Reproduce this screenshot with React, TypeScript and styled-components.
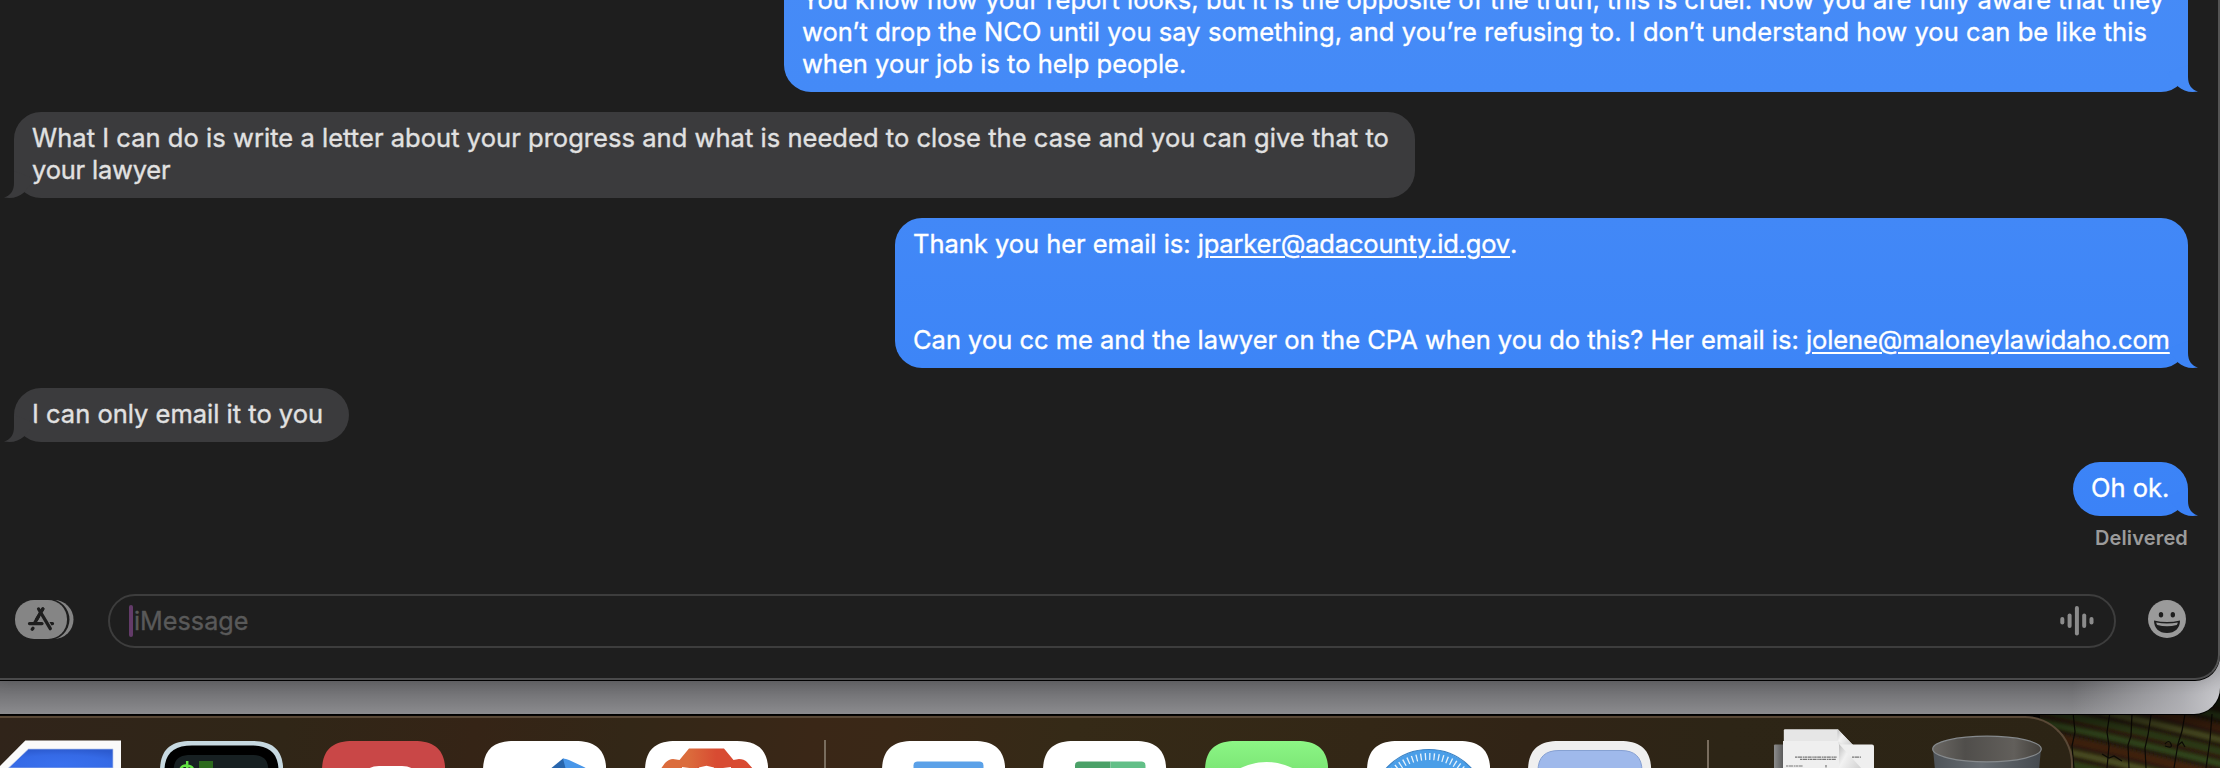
import React from "react";
import styled, { createGlobalStyle } from "styled-components";

const Global = createGlobalStyle`
  * { box-sizing: border-box; }
  html, body { margin: 0; background: #000; overflow: hidden; }
  body { font-family: Inter, "Liberation Sans", sans-serif; }
`;

/* ---------- desktop and windows ---------- */

const Desktop = styled.div`
  position: relative;
  width: 2220px;
  height: 768px;
  overflow: hidden;
  background: #060402;
`;

const Wallpaper = styled.svg`
  position: absolute;
  right: 0;
  bottom: 0;
`;

const BackWindow = styled.div`
  position: relative;
  height: 714px;
  border-radius: 0 0 26px 0;
  overflow: hidden;
  background:
    radial-gradient(circle at 2222px 700px, #c9c9cd 0, rgba(190, 190, 195, 0.75) 40px, rgba(150, 150, 154, 0) 150px),
    linear-gradient(#67676a 682px, #8b8b8e 714px);
  box-shadow: 0 0 0 1px #000;
`;

const ChatWindow = styled.div`
  display: flex;
  flex-direction: column;
  height: 680px;
  border-right: 2px solid #545454;
  border-bottom: 2px solid #4a4a4b;
  border-radius: 0 0 25px 0;
  background: #1e1e1e;
  box-shadow: 0 1px 0 #000, 0 2px 14px rgba(0, 0, 0, 0.12);
`;

/* ---------- messages ---------- */

const Conversation = styled.div`
  display: flex;
  flex-direction: column;
  justify-content: flex-end;
  gap: 20px;
  height: 516px;
  flex: none;
  padding: 0 30px 0 14px;
`;

const Clip = styled.div`
  overflow: hidden;
  flex: none;
`;

const Bubble = styled.div<{ $sent?: boolean; $width: number; $top?: string; $bottom?: string }>`
  position: relative;
  flex: none;
  align-self: ${(p) => (p.$sent ? "flex-end" : "flex-start")};
  width: ${(p) => p.$width}px;
  padding: 10px 18px 12px;
  border-radius: 27px;
  color: ${(p) => (p.$sent ? "#fff" : "#e1e1e1")};
  background: ${(p) => (p.$sent ? `linear-gradient(${p.$top}, ${p.$bottom})` : "#3b3b3d")};
`;

const TailShape = styled.svg<{ $sent?: boolean; $color: string }>`
  position: absolute;
  bottom: 0;
  width: 37px;
  height: 27px;
  fill: ${(p) => p.$color};
  ${(p) => (p.$sent ? "right: -10px;" : "left: -10px; transform: scaleX(-1);")}
`;

const TextLine = styled.div<{ $tracking?: number }>`
  height: 32px;
  font-size: 25.5px;
  line-height: 32px;
  white-space: pre;
  letter-spacing: ${(p) => p.$tracking ?? 0}px;
  -webkit-text-stroke: 0.35px currentColor;
`;

const MailLink = styled.span<{ $tracking: number }>`
  letter-spacing: ${(p) => p.$tracking}px;
  text-decoration: underline;
  text-decoration-thickness: 2px;
  text-underline-offset: 3px;
`;

const Delivered = styled.div`
  align-self: flex-end;
  margin: 10px 30px 0 0;
  height: 24px;
  font-size: 20px;
  font-weight: 600;
  line-height: 24px;
  letter-spacing: 0.15px;
  color: #9b9b9b;
`;

function Tail({ sent, color }: { sent?: boolean; color: string }) {
  return (
    <TailShape viewBox="0 0 37 27" $sent={sent} $color={color}>
      <path d="M27 0V12C27 20 31 25 37 26.5C29 28 22 26 17 21.5L6 8Z" />
    </TailShape>
  );
}

/* ---------- composer ---------- */

const Composer = styled.div`
  display: flex;
  align-items: center;
  height: 54px;
  margin-top: 44px;
  padding: 0 32px 0 15px;
  flex: none;
`;

const AppsButton = styled.svg`
  width: 59px;
  height: 39px;
  margin: 0 34px 3px 0;
`;

const Field = styled.div`
  display: flex;
  align-items: center;
  flex: 1;
  height: 54px;
  padding: 0 20px 0 19px;
  border: 2px solid #3d3d3d;
  border-radius: 27px;
`;

const Caret = styled.span`
  width: 4px;
  height: 32px;
  border-radius: 2px;
  background: #633b69;
`;

const Placeholder = styled.span`
  flex: 1;
  margin-left: 1px;
  font-size: 25.2px;
  line-height: 32px;
  color: #595959;
  -webkit-text-stroke: 0.35px currentColor;
`;

const Wave = styled.svg`
  width: 34px;
  height: 30px;
`;

const EmojiButton = styled.svg`
  width: 38px;
  height: 38px;
  margin: 0 0 4px 32px;
`;

/* ---------- dock ---------- */

const Dock = styled.div`
  position: relative;
  display: flex;
  align-items: flex-start;
  gap: 38.5px;
  width: 2073px;
  height: 90px;
  margin-top: 2px;
  padding: 10px 0 0;
  border: solid #594836;
  border-width: 2px 2px 0 0;
  border-radius: 0 48px 0 0;
  background: linear-gradient(100deg, #30241a 0, #302617 280px, #352416 470px, #332717 620px, #3a2717 800px, #3a2817 880px, #352a17 1060px, #332716 1350px, #312416 1510px, #2d2516 1700px, #2c2415 100%);
`;

const DockIcon = styled.svg<{ $first?: boolean }>`
  flex: none;
  width: 123.2px;
  height: 40px;
  margin-left: ${(p) => (p.$first ? "-1.8px" : "0")};
`;

const Separator = styled.div`
  flex: none;
  width: 2px;
  height: 60px;
  margin: 12px 17.3px 0;
  background: #796d5e;
`;

function Tile({ fill = "#fff" }: { fill?: string }) {
  return <path d="M0 43C0 22 10 13 31 13H92C113 13 123.2 22 123.2 43V60H0Z" fill={fill} />;
}

const rows = Array.from({ length: 16 }, (_, i) => i);

export default function App() {
  return (
    <>
      <Global />
      <Desktop>
        <Wallpaper width="180" height="90" viewBox="0 0 180 90">
          <defs>
            <linearGradient id="shade" x1="0" y1="0" x2="0" y2="1">
              <stop offset="0.3" stopColor="#000" stopOpacity="0.7" />
              <stop offset="0.6" stopColor="#000" stopOpacity="0.15" />
              <stop offset="1" stopColor="#000" stopOpacity="0" />
            </linearGradient>
            <filter id="soft"><feGaussianBlur stdDeviation="1.4" /></filter>
          </defs>
          <rect width="180" height="90" fill="#2a220d" />
          <g filter="url(#soft)" fill="none">
            {rows.map((i) => (
              <path
                key={i}
                d={`M-5 ${i * 12 - 53}Q70 ${i * 12 - 38} 190 ${i * 12 - 8}`}
                stroke={["#33461a", "#42230f", "#4b4d20", "#2f3d14"][i % 4]}
                strokeWidth={i % 2 ? 7 : 6}
              />
            ))}
            {rows.map((i) => (
              <path
                key={i}
                d={`M-5 ${i * 12 - 48}Q70 ${i * 12 - 33} 190 ${i * 12 - 3}`}
                stroke={i % 2 ? "#32170d" : "#22140a"}
                strokeWidth="2.5"
              />
            ))}
          </g>
          <g stroke="#0d0a06" strokeWidth="1.2" fill="none">
            <path d="M33 34l2 20-3 14 2 22M70 34l-3 20 2 14-2 22M92 36l-1 22-3 9 1 23M111 37l-3 20-3 13 1 20M145 36l-3 17-4 13-4 24M172 36l-2 26-4 28" />
            <path d="M62 76l7 4 5-2 8 5M125 66q4-5 6 0t-6 2M137 68l5-4 3 5" />
          </g>
          <rect width="180" height="90" fill="url(#shade)" />
        </Wallpaper>

        <BackWindow>
          <ChatWindow>
            <Clip>
              <Conversation>
                <Bubble $sent $width={1404} $top="#468bf7" $bottom="#448af7">
                  <TextLine $tracking={0.03}>You know how your report looks, but it is the opposite of the truth, this is cruel. Now you are fully aware that they</TextLine>
                  <TextLine $tracking={0.06}>won’t drop the NCO until you say something, and you’re refusing to. I don’t understand how you can be like this</TextLine>
                  <TextLine>when your job is to help people.</TextLine>
                  <Tail sent color="#448af7" />
                </Bubble>
                <Bubble $width={1401}>
                  <TextLine $tracking={0.04}>What I can do is write a letter about your progress and what is needed to close the case and you can give that to</TextLine>
                  <TextLine $tracking={-0.2}>your lawyer</TextLine>
                  <Tail color="#3b3b3d" />
                </Bubble>
                <Bubble $sent $width={1293} $top="#4288f7" $bottom="#3d85f7">
                  <TextLine $tracking={-0.03}>
                    Thank you her email is: <MailLink $tracking={-0.17}>jparker@adacounty.id.gov</MailLink>.
                  </TextLine>
                  <TextLine />
                  <TextLine />
                  <TextLine $tracking={-0.015}>
                    Can you cc me and the lawyer on the CPA when you do this? Her email is: <MailLink $tracking={-0.1}>jolene@maloneylawidaho.com</MailLink>
                  </TextLine>
                  <Tail sent color="#3d85f7" />
                </Bubble>
                <Bubble $width={335}>
                  <TextLine>I can only email it to you</TextLine>
                  <Tail color="#3b3b3d" />
                </Bubble>
                <Bubble $sent $width={115} $top="#3c84f7" $bottom="#3b82f7">
                  <TextLine>Oh ok.</TextLine>
                  <Tail sent color="#3b82f7" />
                </Bubble>
              </Conversation>
            </Clip>
            <Delivered>Delivered</Delivered>

            <Composer>
              <AppsButton viewBox="0 0 59 39">
                <rect x="10" width="48.5" height="39" rx="19.5" fill="#858585" />
                <rect x="-3" y="-1" width="57.5" height="41" rx="20.5" fill="#1e1e1e" />
                <rect width="52" height="39" rx="19" fill="#858585" />
                <g stroke="#1e1e1e" strokeWidth="3.3" strokeLinecap="round" fill="none">
                  <path d="M27.8 9L19.3 23.5M14.5 23.6H27M33.5 23.6H37.5M18 28.2L17.2 29.2" />
                </g>
                <path d="M26 12.5L34 26.5" stroke="#858585" strokeWidth="5.4" />
                <path d="M23.6 9L35.3 28.7" stroke="#1e1e1e" strokeWidth="3.3" strokeLinecap="round" />
                <path d="M27.8 9L21.5 19.7" stroke="#1e1e1e" strokeWidth="3.3" strokeLinecap="round" />
              </AppsButton>
              <Field>
                <Caret />
                <Placeholder>iMessage</Placeholder>
                <Wave viewBox="0 0 34 30">
                  <g fill="#8b8b8b">
                    <rect x="0.3" y="11" width="4" height="7.5" rx="2" />
                    <rect x="7.6" y="7.5" width="4" height="14.5" rx="2" />
                    <rect x="14.9" y="0" width="4" height="29.5" rx="2" />
                    <rect x="22.2" y="7.5" width="4" height="14.5" rx="2" />
                    <rect x="29.5" y="11" width="4" height="7.5" rx="2" />
                  </g>
                </Wave>
              </Field>
              <EmojiButton viewBox="0 0 38 38">
                <circle cx="19" cy="19" r="19" fill="#9a9a9a" />
                <ellipse cx="13" cy="14.7" rx="2.2" ry="2.7" fill="#1e1e1e" />
                <ellipse cx="24.8" cy="14.7" rx="2.2" ry="2.7" fill="#1e1e1e" />
                <path d="M6 20.4Q19 23.4 32 20.4C32 28 27 33 19 33C11 33 6 28 6 20.4Z" fill="#1e1e1e" />
                <path d="M8.2 22.4Q19 24.6 29.8 22.4Q29.5 24 28.7 25.1Q19 27.6 9.3 25.1Q8.5 24 8.2 22.4Z" fill="#9a9a9a" />
              </EmojiButton>
            </Composer>
          </ChatWindow>
        </BackWindow>

        <Dock>
          <DockIcon $first viewBox="0 0 123.2 40">
            <defs>
              <radialGradient id="blueSheet" cx="0.5" cy="0.8" r="0.8">
                <stop offset="0" stopColor="#3970ee" />
                <stop offset="0.6" stopColor="#356ae6" />
                <stop offset="1" stopColor="#2c5bd0" />
              </radialGradient>
            </defs>
            <path d="M0 40L27.3 12.4H123V40Z" fill="#fafafa" />
            <path d="M10.5 40L30.5 21H115V40Z" fill="url(#blueSheet)" stroke="#b9c6e8" strokeWidth="0.7" />
          </DockIcon>
          <DockIcon viewBox="0 0 123.2 40">
            <Tile fill="#c7d9e1" />
            <path d="M4.5 48V43C4.5 25 14 17.5 32 17.5H91C109 17.5 118.5 25 118.5 43V48Z" fill="#000" />
            <path d="M13.5 48V44C13.5 31 19 27 31 27H91C103 27 108.5 31 108.5 44V48Z" fill="#172022" />
            <path d="M27.2 33V40M20.5 41Q22 37 27 37.5T33 41" stroke="#62e143" strokeWidth="2.5" fill="none" />
            <rect x="39" y="33" width="14" height="8" fill="#2c6a1d" />
          </DockIcon>
          <DockIcon viewBox="0 0 123.2 40">
            <Tile fill="#c94747" />
            <path d="M45 42Q49 38 57 38H80Q88 38 92 42Z" fill="#fff" />
          </DockIcon>
          <DockIcon viewBox="0 0 123.2 40">
            <Tile />
            <path d="M66 42L80 30.5L83 32V42Z" fill="#2866ad" />
            <path d="M80 30.5Q83 30.5 86 32L101 39L106 42H83Z" fill="#4997e9" />
          </DockIcon>
          <DockIcon viewBox="0 0 123.2 40">
            <defs>
              <linearGradient id="lion">
                <stop offset="0.3" stopColor="#db6c3c" />
                <stop offset="0.6" stopColor="#d84b32" />
              </linearGradient>
            </defs>
            <Tile />
            <path d="M15 42L20 35Q24 31 28 31L34.5 32L44 20.5H79L88.5 32L94 31Q99 31 102 34L109 42Z" fill="url(#lion)" />
            <path d="M37 39L48 40.5Q54 39.5 61.5 37.7Q69 39.5 74 40.5L86 39V42H37Z" fill="#fff" />
            <path d="M48 42L54 39.5M75 42L69 39.5" stroke="#d95737" strokeWidth="2" />
          </DockIcon>
          <Separator />
          <DockIcon viewBox="0 0 123.2 40">
            <Tile />
            <rect x="31.5" y="33.5" width="70" height="20" rx="4" fill="#5ba1e8" />
          </DockIcon>
          <DockIcon viewBox="0 0 123.2 40">
            <Tile />
            <path d="M32 45V37.5Q32 33.5 36 33.5H67.5V45Z" fill="#4ba168" />
            <path d="M67.5 33.5H98.5Q102.5 33.5 102.5 37.5V45H67.5Z" fill="#62bf87" />
          </DockIcon>
          <DockIcon viewBox="0 0 123.2 40">
            <defs>
              <linearGradient id="green" x1="0" y1="0" x2="0" y2="1">
                <stop offset="0" stopColor="#8cf685" />
                <stop offset="0.7" stopColor="#7ae474" />
              </linearGradient>
            </defs>
            <Tile fill="url(#green)" />
            <ellipse cx="61.5" cy="72" rx="48" ry="38" fill="#fdfffc" />
          </DockIcon>
          <DockIcon viewBox="0 0 123.2 40">
            <Tile />
            <circle cx="61.8" cy="79" r="57.5" fill="#4a9ee8" stroke="#3b82c4" strokeWidth="1.2" />
            <circle cx="61.8" cy="79" r="50.5" fill="none" stroke="#e6f2fc" strokeWidth="7" strokeDasharray="1.3 3.107" />
          </DockIcon>
          <DockIcon viewBox="0 0 123.2 40">
            <Tile fill="#efefef" />
            <path d="M10 48V43Q10 22.5 31 22.5H93Q114 22.5 114 43V48Z" fill="#9fb9eb" stroke="#86a0d2" strokeWidth="1" />
          </DockIcon>
          <Separator />
          <DockIcon viewBox="0 0 123.2 40">
            <defs>
              <linearGradient id="fold" x1="0" y1="0" x2="1" y2="0.6">
                <stop offset="0" stopColor="#bdbdbd" />
                <stop offset="0.4" stopColor="#f2f2f2" />
                <stop offset="1" stopColor="#d5d5d5" />
              </linearGradient>
              <linearGradient id="spine">
                <stop offset="0" stopColor="#8c8c8c" />
                <stop offset="1" stopColor="#555" />
              </linearGradient>
            </defs>
            <rect x="9" y="16.5" width="10" height="30" rx="1" fill="url(#spine)" />
            <path d="M18.8 40V2.5Q18.8 1.2 20 1.2H73L88 17V40Z" fill="#e6e6e6" />
            <path d="M72.5 1.2L88 17H79L72.5 13Z" fill="url(#fold)" />
            <path d="M18 40V13H73V16.5H107Q109 16.5 109 18.5V42H18Z" fill="#efefef" />
            <path d="M74 16L98 42H74Z" fill="url(#fold)" />
            <g stroke="#777" strokeWidth="1.2" strokeDasharray="2.5 0.5 4 0.7 1.5 0.4">
              <path d="M30 29.2H72M87 29.2H96M35 31.4H71" />
              <path d="M21 38H38M61 37V42" />
            </g>
          </DockIcon>
          <DockIcon viewBox="0 0 123.2 40">
            <defs>
              <linearGradient id="can">
                <stop offset="0" stopColor="#4e5358" />
                <stop offset="0.45" stopColor="#676d73" />
                <stop offset="1" stopColor="#454a4f" />
              </linearGradient>
              <linearGradient id="hollow">
                <stop offset="0" stopColor="#6b6864" />
                <stop offset="0.3" stopColor="#504e4b" />
                <stop offset="0.75" stopColor="#625f5b" />
                <stop offset="1" stopColor="#44413c" />
              </linearGradient>
            </defs>
            <path d="M6 21H114L112 42H8Z" fill="url(#can)" />
            <ellipse cx="60" cy="21" rx="54.3" ry="12.8" fill="url(#hollow)" stroke="#85898c" strokeWidth="1.2" />
          </DockIcon>
        </Dock>
      </Desktop>
    </>
  );
}
